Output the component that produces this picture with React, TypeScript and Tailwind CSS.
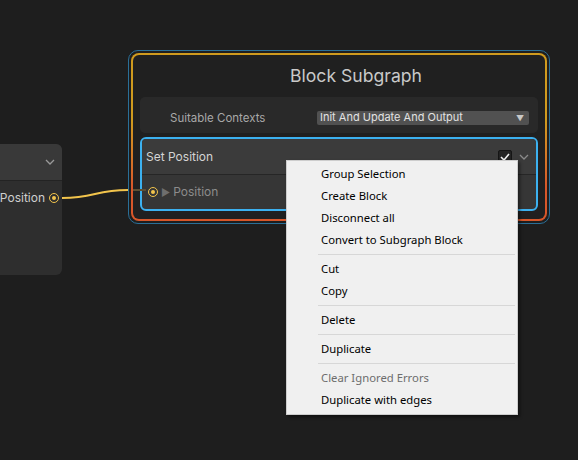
import React from 'react';

const menuItems: (string | null | { label: string; disabled: boolean })[] = [
  'Group Selection',
  'Create Block',
  'Disconnect all',
  'Convert to Subgraph Block',
  null,
  'Cut',
  'Copy',
  null,
  'Delete',
  null,
  'Duplicate',
  null,
  { label: 'Clear Ignored Errors', disabled: true },
  'Duplicate with edges',
];

function Port() {
  return (
    <span className="flex h-[10px] w-[10px] items-center justify-center rounded-full border-[1.5px] border-[#f2c44c]">
      <span className="h-[4px] w-[4px] rounded-full bg-[#f2c44c]" />
    </span>
  );
}

function Chevron({ className }: { className?: string }) {
  return (
    <svg width="10" height="6" viewBox="0 0 10 6" className={className}>
      <path d="M1 1l4 4 4-4" fill="none" stroke="currentColor" strokeWidth="1.3" />
    </svg>
  );
}

export default function App() {
  return (
    <div
      className="relative h-[460px] w-[578px] overflow-hidden bg-[#1e1e1e]"
      style={{ fontFamily: 'Inter, "Noto Sans", sans-serif' }}
    >
      {/* left node */}
      <div className="absolute left-[-20px] top-[144px] flex h-[131px] w-[82px] flex-col overflow-hidden rounded-r-[6px] bg-[#2e2e2e]">
        <div className="flex h-[37px] items-center justify-end border-b border-[#232323] bg-[#393939] pr-[7px]">
          <Chevron className="text-[#9a9a9a]" />
        </div>
        <div className="flex h-[34px] items-center justify-end gap-[4px] pr-[3px] text-[12px] text-[#cfcfcf]">
          <span>Position</span>
          <Port />
        </div>
      </div>

      {/* wire */}
      <svg className="absolute left-0 top-0 z-10" width="578" height="460">
        <path d="M62 198 C 95 198, 95 190, 128 190" fill="none" stroke="#f2c44c" strokeWidth="2" />
        <path d="M133 190 L 146 190" fill="none" stroke="#5d5034" strokeWidth="2" />
      </svg>

      {/* block subgraph node */}
      <div className="absolute left-[128px] top-[50px] h-[174px] w-[422px] rounded-[10px] border border-[#2a6f98] p-[2px]">
        <div className="h-full w-full rounded-[8px] bg-gradient-to-b from-[#cf9a1e] from-40% to-[#d8572a] to-80% p-[2px]">
          <div className="flex h-full w-full flex-col rounded-[6px] bg-[#202020] px-[7px] pt-[9px]">
            <div className="pl-[34px] text-center text-[17.6px] leading-[24px] text-[#c9c9c9]">Block Subgraph</div>
            <div className="mt-[9px] flex h-[36px] items-center rounded-[5px] bg-[#292929] pl-[30px] pr-[9px] text-[11.5px]">
              <span className="w-[147px] pt-[8px] text-[#a8a8a8]">Suitable Contexts</span>
              <div className="mt-[5px] flex h-[14px] flex-1 items-center justify-between rounded-[2px] bg-[#515151] pl-[3px] pr-[5px] text-[#e2e2e2]">
                <span className="text-[11px]">Init And Update And Output</span>
                <span className="text-[8px] text-[#c8c8c8]">▼</span>
              </div>
            </div>
            <div className="mt-[4px] flex h-[74px] flex-col overflow-hidden rounded-[6px] border-2 border-[#3cb1f0] bg-[#363636]">
              <div className="flex h-[36px] items-center justify-between border-b border-[#262626] bg-[#3b3b3b] pl-[4px] pr-[7px]">
                <span className="text-[12px] text-[#d4d4d4]">Set Position</span>
                <div className="flex items-center gap-[7px]">
                  <span className="flex h-[14px] w-[14px] items-center justify-center rounded-[2px] border border-[#151515] bg-[#232323]">
                    <svg width="10" height="8" viewBox="0 0 10 8">
                      <path d="M1 4l3 3 5-6" fill="none" stroke="#f0f0f0" strokeWidth="1.6" />
                    </svg>
                  </span>
                  <Chevron className="text-[#8a8a8a]" />
                </div>
              </div>
              <div className="flex flex-1 items-center gap-[3px] pl-[6px] text-[12px] text-[#8c8c8c]">
                <Port />
                <span className="text-[10px] text-[#6e6e6e]">▶</span>
                <span>Position</span>
              </div>
            </div>
          </div>
        </div>
      </div>

      {/* context menu */}
      <div
        className="absolute left-[286px] top-[160px] z-20 w-[232px] border border-[#cdcdcd] bg-[#f0f0f0] pb-[3px] pt-[2px] shadow-[2px_2px_3px_rgba(0,0,0,0.45)]"
        style={{ fontFamily: '"Noto Sans", "Liberation Sans", sans-serif' }}
      >
        {menuItems.map((item, i) => {
          if (item === null) {
            return <div key={i} className="my-[3px] ml-[31px] mr-[2px] h-px bg-[#d7d7d7]" />;
          }
          const label = typeof item === 'string' ? item : item.label;
          const disabled = typeof item !== 'string' && item.disabled;
          return (
            <div
              key={i}
              className={`flex h-[22px] items-center pl-[34px] text-[11.3px] ${disabled ? 'text-[#6d6d6d]' : 'text-black'}`}
            >
              {label}
            </div>
          );
        })}
      </div>
    </div>
  );
}
